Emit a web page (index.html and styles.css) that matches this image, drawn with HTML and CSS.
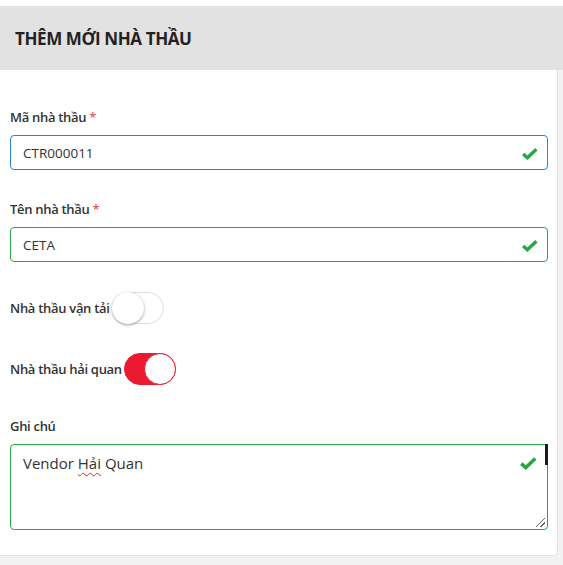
FILE: index.html
```html
<!DOCTYPE html>
<html>
<head>
  <title>Thêm mới nhà thầu</title>
  <link rel="stylesheet" href="styles.css">
</head>
<body>
  <div class="top-strip"></div>
  <div class="card-header">
    <h2>THÊM MỚI NHÀ THẦU</h2>
  </div>
  <div class="page">
    <form class="card-body">
      <div class="form-group">
        <label>Mã nhà thầu <span class="req">*</span></label>
        <div class="field focused">
          <input type="text" value="CTR000011">
          <svg class="check" viewBox="0 0 16 12"><polyline points="2,6.5 6,10 14.5,2"/></svg>
        </div>
      </div>

      <div class="form-group">
        <label>Tên nhà thầu <span class="req">*</span></label>
        <div class="field valid">
          <input type="text" value="CETA">
          <svg class="check" viewBox="0 0 16 12"><polyline points="2,6.5 6,10 14.5,2"/></svg>
        </div>
      </div>

      <div class="switch-row">
        <label>Nhà thầu vận tải</label>
        <span class="switch"><span class="knob"></span></span>
      </div>

      <div class="switch-row second">
        <label>Nhà thầu hải quan</label>
        <span class="switch on"><span class="knob"></span></span>
      </div>

      <div class="form-group note">
        <label>Ghi chú</label>
        <div class="field valid area">
          <div class="textarea">Vendor <span class="typo">Hải</span> Quan</div>
          <svg class="check" viewBox="0 0 16 12"><polyline points="2,6.5 6,10 14.5,2"/></svg>
          <span class="resize"></span>
        </div>
      </div>
    </form>
  </div>
</body>
</html>
```

FILE: styles.css
```css
body {
  font-family: "Open Sans", "Noto Sans", sans-serif;
  margin: 0;
  background-color: #f2f2f2;
  color: #212529;
}

.top-strip {
  height: 6px;
  background-color: #fff;
}

.card-header {
  background-color: #e2e2e2;
  height: 64px;
  display: flex;
  align-items: center;
  padding-left: 15px;
}

.card-header h2 {
  margin: 0;
  font-size: 17px;
  font-weight: 700;
  color: #222;
  letter-spacing: -0.4px;
}

.page {
  width: 558px;
}

.card-body {
  background-color: #fff;
  border-right: 1px solid #e4e4e4;
  border-bottom: 1px solid #e4e4e4;
  border-bottom-right-radius: 5px;
  padding: 38px 9px 25px 10px;
}

label {
  font-size: 13px;
  font-weight: 600;
  color: #333;
  line-height: 18px;
  letter-spacing: -0.3px;
}

.req {
  color: #e45b5b;
}

.form-group {
  display: flex;
  flex-direction: column;
  gap: 9px;
  margin-bottom: 30px;
}

.field {
  position: relative;
  height: 35px;
  border: 1px solid #28a745;
  border-radius: 4px;
  box-sizing: border-box;
}

.field.focused {
  border-color: #2f80d1;
}

.field input {
  border: none;
  outline: none;
  background: transparent;
  width: 100%;
  height: 100%;
  box-sizing: border-box;
  padding: 0 12px;
  font-family: "Open Sans", "Noto Sans", sans-serif;
  font-size: 13.5px;
  color: #333;
}

.check {
  position: absolute;
  right: 9px;
  top: 11px;
  width: 17px;
  height: 13px;
  fill: none;
  stroke: #28a745;
  stroke-width: 3.2;
}

.switch-row {
  display: flex;
  align-items: center;
  gap: 2px;
  margin-bottom: 29px;
}

.switch-row.second {
  margin-bottom: 32px;
}

.switch {
  position: relative;
  width: 52px;
  height: 32px;
  border: 1px solid #dfdfdf;
  border-radius: 16px;
  box-sizing: border-box;
  background-color: #fff;
}

.switch .knob {
  position: absolute;
  left: -1px;
  top: -1px;
  width: 32px;
  height: 32px;
  border-radius: 50%;
  background-color: #fff;
  box-shadow: 0 1px 3px rgba(0, 0, 0, 0.4);
}

.switch.on {
  background-color: #ec1a31;
  border-color: #ec1a31;
}

.switch.on .knob {
  left: auto;
  right: -1px;
  box-shadow: none;
  border: 1px solid #ec1a31;
  box-sizing: border-box;
}

.note {
  margin-bottom: 0;
}

.field.area {
  height: 86px;
}

.textarea {
  padding: 8px 12px;
  font-size: 15px;
  color: #333;
}

.typo {
  text-decoration: underline wavy #e02020;
  text-decoration-thickness: 1px;
  text-underline-offset: 3px;
}

.area .check {
  top: 11px;
  right: 10px;
  width: 18px;
  height: 14px;
}

.area::after {
  content: "";
  position: absolute;
  right: -1px;
  top: -1px;
  width: 3px;
  height: 21px;
  background-color: #1a1a1a;
}

.resize {
  position: absolute;
  right: 2px;
  bottom: 2px;
  width: 9px;
  height: 9px;
  background: linear-gradient(135deg, transparent 45%, #666 45%, #666 55%, transparent 55%, transparent 72%, #666 72%, #666 82%, transparent 82%);
}
```
